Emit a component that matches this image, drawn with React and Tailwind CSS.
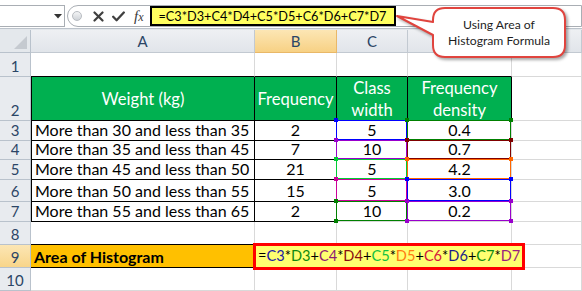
import React from "react";

const rows = [
  ["More than 30 and less than 35", "2", "5", "0.4"],
  ["More than 35 and less than 45", "7", "10", "0.7"],
  ["More than 45 and less than 50", "21", "5", "4.2"],
  ["More than 50 and less than 55", "15", "5", "3.0"],
  ["More than 55 and less than 65", "2", "10", "0.2"],
];

const cBorder = ["border-[#0000ff]", "border-[#9900cc]", "border-[#00cc33]", "border-[#cc0099]", "border-[#008000]"];
const cFill = ["bg-[#0000ff]", "bg-[#9900cc]", "bg-[#00cc33]", "bg-[#cc0099]", "bg-[#008000]"];
const dBorder = ["border-[#008000]", "border-[#800000]", "border-[#ff6600]", "border-[#0000ff]", "border-[#9900cc]"];
const dFill = ["bg-[#008000]", "bg-[#800000]", "bg-[#ff6600]", "bg-[#0000ff]", "bg-[#9900cc]"];

const formula = [
  ["=", "text-black"],
  ["C3", "text-[#1c1ca6]"],
  ["*", "text-black"],
  ["D3", "text-[#108a10]"],
  ["+", "text-black"],
  ["C4", "text-[#8e1a73]"],
  ["*", "text-black"],
  ["D4", "text-[#8a0f0f]"],
  ["+", "text-black"],
  ["C5", "text-[#13c13f]"],
  ["*", "text-black"],
  ["D5", "text-[#ff7a10]"],
  ["+", "text-black"],
  ["C6", "text-[#d4143c]"],
  ["*", "text-black"],
  ["D6", "text-[#1c1c8a]"],
  ["+", "text-black"],
  ["C7", "text-[#108a10]"],
  ["*", "text-black"],
  ["D7", "text-[#9a1f7e]"],
];

function RangeBox({ border, fill }) {
  return (
    <div className={`pointer-events-none absolute -left-px -top-px right-0 bottom-0 z-10 border ${border}`}>
      <span className={`absolute -left-[3px] -top-[3px] h-[4px] w-[4px] ${fill}`} />
      <span className={`absolute -right-[3px] -top-[3px] h-[4px] w-[4px] ${fill}`} />
      <span className={`absolute -left-[3px] -bottom-[3px] h-[4px] w-[4px] ${fill}`} />
      <span className={`absolute -right-[3px] -bottom-[3px] h-[4px] w-[4px] ${fill}`} />
    </div>
  );
}

function RowHead({ n, active }) {
  return (
    <div
      className={`flex items-end justify-center border-r border-b border-[#b9c2cc] text-[15px] leading-[20px] text-[#2b4566] ${
        active ? "bg-linear-to-b from-[#fce6b4] to-[#f8d58a]" : "bg-[#e8ebef]"
      }`}
    >
      {n}
    </div>
  );
}

function Cell({ className = "", children }) {
  return <div className={`border-r border-b border-[#d9d9d9] ${className}`}>{children}</div>;
}

export default function App() {
  return (
    <div className="relative h-[291px] w-[582px] overflow-hidden bg-white font-[Lato,sans-serif] text-black">
      {/* Formula bar */}
      <div className="flex h-[28px] items-start bg-white pt-[5px]">
        <div className="relative h-[22px] w-[65px] border-y border-r border-[#a9aeb4] bg-white">
          <svg className="absolute left-[54px] top-[8px]" width="8" height="5" viewBox="0 0 8 5">
            <polygon points="0,0 8,0 4,4.5" fill="#333" />
          </svg>
        </div>
        <div className="ml-[2px] flex h-[22px] flex-1 items-center rounded-l-[11px] border border-[#a9aeb4] bg-white">
          <div className="ml-[4px] h-[10px] w-[10px] rounded-full border border-[#b8bcc1] bg-linear-to-b from-[#f4f5f6] to-[#cfd3d8]" />
          <svg className="ml-[11px]" width="11" height="11" viewBox="0 0 11 11">
            <path d="M1.5 1.5 L9.5 9.5 M9.5 1.5 L1.5 9.5" stroke="#3f3f3f" strokeWidth="2.2" strokeLinecap="round" />
          </svg>
          <svg className="ml-[8px]" width="13" height="11" viewBox="0 0 13 11">
            <path d="M1.2 5.8 L4.6 9.2 L11.8 1.5" stroke="#3f3f3f" strokeWidth="2.3" fill="none" strokeLinejoin="round" strokeLinecap="round" />
          </svg>
          <span className="ml-[9px] font-['Liberation_Serif',serif] text-[15px] italic leading-none text-[#3a3a3a]">
            f<span className="text-[12px]">x</span>
          </span>
          <div className="ml-[6px] flex h-[20px] w-[246px] items-center border-2 border-black bg-[#ffff60] pl-[7px] text-[12.7px] leading-none">
            =C3*D3+C4*D4+C5*D5+C6*D6+C7*D7
          </div>
        </div>
      </div>
      <div className="h-[2px] border-t border-[#bcc3cb] bg-[#e3e7eb]" />

      {/* Sheet */}
      <div className="grid grid-cols-[31px_224px_82px_71px_104px_70px] grid-rows-[23px_24px_44px_20px_19px_20px_22px_20px_23px_23px_23px] text-[16px] leading-[20px]">
        {/* column headers */}
        <div className="relative border-r border-b border-[#b9c2cc] bg-[#e4e8ec]">
          <svg className="absolute right-[3px] bottom-[3px]" width="13" height="13" viewBox="0 0 13 13">
            <polygon points="13,0 13,13 0,13" fill="#c5cad0" />
          </svg>
        </div>
        {["A", "B", "C", "D", ""].map((l) => (
          <div
            key={l || "E"}
            className={`flex items-center justify-center border-r border-b text-[15px] text-[#2b4566] ${
              l === "B"
                ? "border-[#e9b868] bg-linear-to-b from-[#fce6b4] to-[#f7d184]"
                : "border-[#c2c9d1] bg-linear-to-b from-[#eef0f3] to-[#e1e5ea]"
            }`}
          >
            {l}
          </div>
        ))}

        {/* row 1 */}
        <RowHead n="1" />
        <Cell className="border-b-black" />
        <Cell className="border-b-black" />
        <Cell className="border-b-black" />
        <Cell className="border-b-black" />
        <Cell />

        {/* row 2 */}
        <RowHead n="2" />
        <div className="flex items-center justify-center border-x border-b border-black bg-[#00b050] text-[16.6px] text-white">
          Weight (kg)
        </div>
        <div className="flex items-center justify-center border-r border-b border-black bg-[#00b050] text-[16.6px] text-white">
          Frequency
        </div>
        <div className="flex flex-col items-center justify-center border-r border-b border-black bg-[#00b050] text-[16.6px] leading-[22px] text-white">
          <span>Class</span>
          <span>width</span>
        </div>
        <div className="flex flex-col items-center justify-center border-r border-b border-black bg-[#00b050] text-[16.6px] leading-[22px] text-white">
          <span>Frequency</span>
          <span>density</span>
        </div>
        <Cell />

        {/* rows 3-7 */}
        {rows.map((r, i) => (
          <React.Fragment key={i}>
            <RowHead n={String(i + 3)} />
            <div className="flex items-end whitespace-nowrap border-x border-b border-black pl-[3px]">{r[0]}</div>
            <div className="flex items-end justify-center border-r border-b border-black">{r[1]}</div>
            <div className="relative flex items-end justify-center border-r border-b border-[#d9d9d9]">
              {r[2]}
              <RangeBox border={cBorder[i]} fill={cFill[i]} />
            </div>
            <div className="relative flex items-end justify-center border-r border-b border-[#d9d9d9]">
              {r[3]}
              <RangeBox border={dBorder[i]} fill={dFill[i]} />
            </div>
            <Cell />
          </React.Fragment>
        ))}

        {/* row 8 */}
        <RowHead n="8" />
        <Cell className="border-b-black" />
        <Cell />
        <Cell />
        <Cell />
        <Cell />

        {/* row 9 */}
        <RowHead n="9" active />
        <div className="flex items-end whitespace-nowrap border-b border-black bg-[#ffc000] pl-[3px] font-bold">Area of Histogram</div>
        <div className="relative col-span-3 border-b border-[#d9d9d9]">
          <div className="absolute -left-[2px] -top-[2px] z-20 flex h-[27px] w-[272px] items-center border-[3px] border-[#ff0000] bg-[#ffff70] pl-[2px] text-[14.6px] leading-none">
            {formula.map(([t, c], k) => (
              <span key={k} className={c}>
                {t}
              </span>
            ))}
          </div>
          <span className="absolute left-[81px] -bottom-[3px] z-10 h-[3px] w-px bg-black" />
        </div>
        <Cell />

        {/* row 10 */}
        <RowHead n="10" />
        <Cell />
        <Cell />
        <Cell />
        <Cell />
        <Cell />
      </div>

      {/* Callout */}
      <svg
        className="absolute left-[394px] top-[4px] z-30 drop-shadow-[2px_2px_1.5px_rgba(0,0,0,0.35)]"
        width="180"
        height="60"
        viewBox="0 0 180 60"
      >
        <path
          d="M51 4 H159 Q171 4 171 16 V41 Q171 53 159 53 H51 Q39 53 39 41 V31 L3 12 L39 18 V16 Q39 4 51 4 Z"
          fill="#ffffff"
          stroke="#e0443e"
          strokeWidth="2"
          strokeLinejoin="round"
        />
      </svg>
      <div className="absolute left-[433px] top-[9px] z-40 flex h-[48px] w-[132px] flex-col items-center justify-center text-[12.2px] leading-[16px] text-[#1e1e1e]">
        <span>Using Area of</span>
        <span>Histogram Formula</span>
      </div>
    </div>
  );
}
